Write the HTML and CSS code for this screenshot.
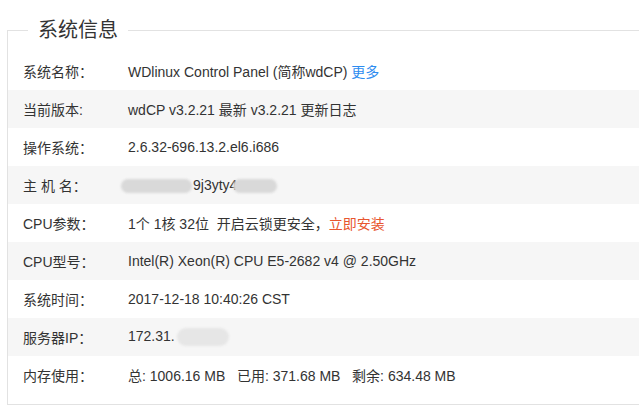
FILE: index.html
```html
<!DOCTYPE html>
<html lang="zh-CN">
<head>
  <meta charset="UTF-8">
  <title>系统信息</title>
  <link rel="stylesheet" href="styles.css">
</head>
<body>

  <fieldset class="info-box">
    <legend>系统信息</legend>

    <table class="info-table">
      <tr>
        <td class="label">系统名称：</td>
        <td>WDlinux Control Panel (简称wdCP) <a href="#" class="link-blue">更多</a></td>
      </tr>
      <tr>
        <td class="label">当前版本:</td>
        <td>wdCP v3.2.21 最新 v3.2.21 更新日志</td>
      </tr>
      <tr>
        <td class="label">操作系统：</td>
        <td>2.6.32-696.13.2.el6.i686</td>
      </tr>
      <tr>
        <td class="label">主 机 名：</td>
        <td><span class="mask mask-host1"></span>9j3yty4<span class="mask mask-host2"></span></td>
      </tr>
      <tr>
        <td class="label">CPU参数：</td>
        <td>1个 1核 32位 &nbsp;开启云锁更安全，<a href="#" class="link-red">立即安装</a></td>
      </tr>
      <tr>
        <td class="label">CPU型号：</td>
        <td>Intel(R) Xeon(R) CPU E5-2682 v4 @ 2.50GHz</td>
      </tr>
      <tr>
        <td class="label">系统时间：</td>
        <td>2017-12-18 10:40:26 CST</td>
      </tr>
      <tr>
        <td class="label">服务器IP：</td>
        <td>172.31.<span class="mask mask-ip"></span></td>
      </tr>
      <tr>
        <td class="label">内存使用：</td>
        <td>总: 1006.16 MB &nbsp;&nbsp;已用: 371.68 MB &nbsp;&nbsp;剩余: 634.48 MB</td>
      </tr>
    </table>
  </fieldset>

</body>
</html>
```

FILE: styles.css
```css
body {
  margin: 0;
  padding: 16px 0 0 7px;
  background-color: white;
  font-family: "Liberation Sans", Arial, "Noto Sans CJK SC", sans-serif;
  font-size: 14px;
  color: #333;
  overflow: hidden;
}

.info-box {
  width: 680px;
  margin: 0;
  padding: 8px 0 10px 0;
  border: 1px solid #e2e2e2;
}

.info-box legend {
  margin-left: 20px;
  padding: 0 10px;
  font-size: 20px;
  line-height: 28px;
  color: #333;
}

.info-table {
  width: 100%;
  border-collapse: collapse;
}

.info-table td {
  height: 38px;
  padding: 0;
}

.info-table tr:nth-child(even) {
  background-color: #f6f6f6;
}

.info-table .label {
  width: 105px;
  padding-left: 15px;
}

.link-blue {
  color: #2d8cf0;
  text-decoration: none;
}

.link-red {
  color: #e8562f;
  text-decoration: none;
}

.mask {
  display: inline-block;
  vertical-align: middle;
  height: 14px;
  background-color: #d9d9d9;
  border-radius: 7px;
  filter: blur(1px);
}

.mask-host1 {
  width: 71px;
  margin: 0 1px 0 -7px;
}

.mask-host2 {
  width: 44px;
  margin-left: -4px;
}

.mask-ip {
  width: 52px;
  height: 18px;
  margin-left: 2px;
  background-color: #e6e6e6;
  border-radius: 9px;
}
```
